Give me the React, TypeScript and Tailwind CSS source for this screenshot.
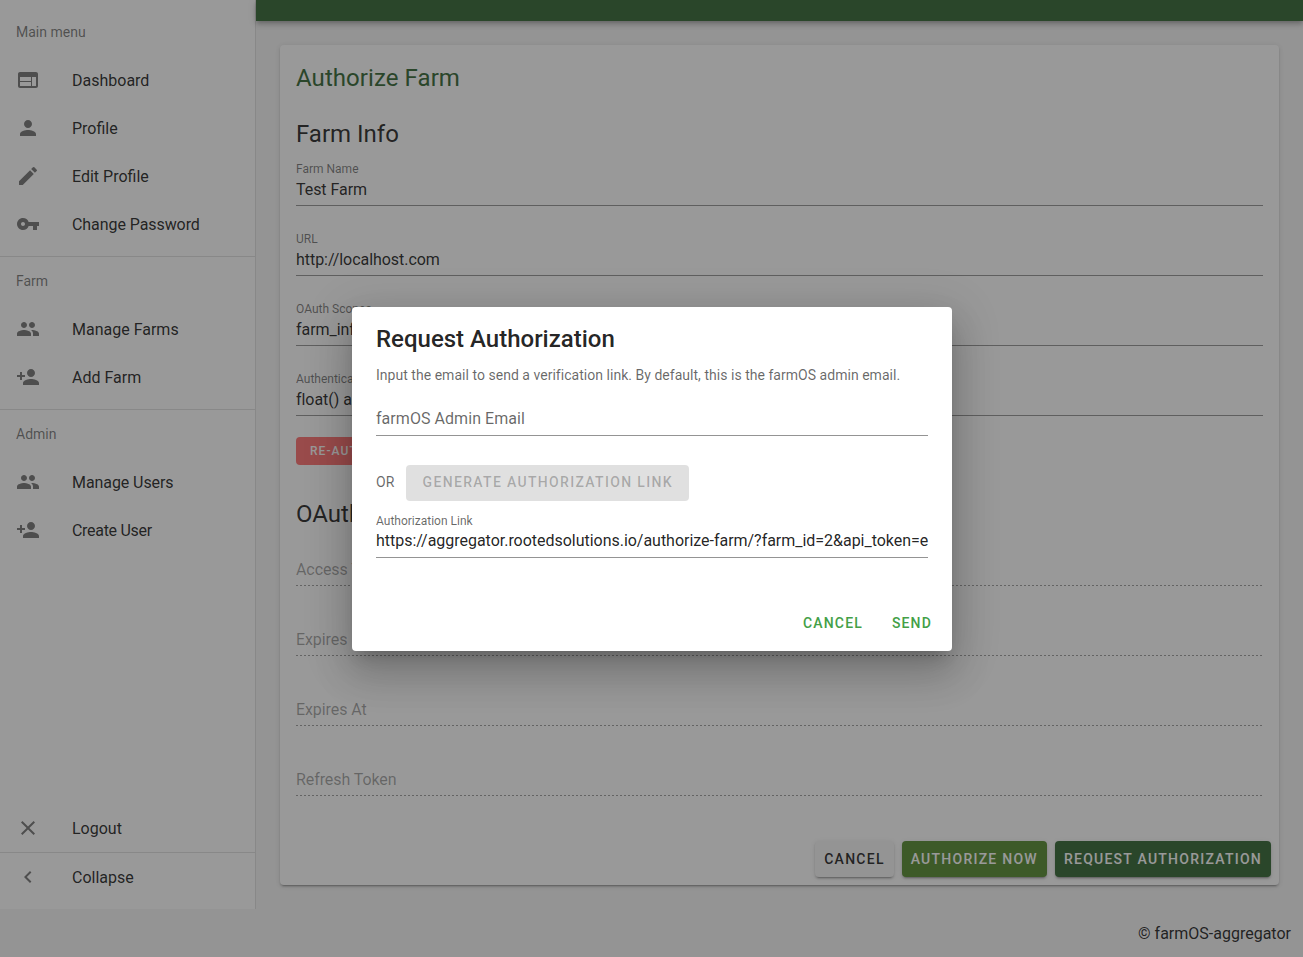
import type { ReactNode } from "react";
import {
  MdChevronLeft,
  MdClose,
  MdEdit,
  MdPeople,
  MdPerson,
  MdPersonAdd,
  MdVpnKey,
  MdWeb,
} from "react-icons/md";

function NavItem({ icon, label, labelClass = "" }: { icon: ReactNode; label: string; labelClass?: string }) {
  return (
    <div className="flex h-12 items-center px-4 text-base text-black/87">
      <span className="mr-8 flex h-6 w-6 items-center justify-center text-2xl text-black/54">{icon}</span>
      <span className={`pt-[2px] ${labelClass}`}>{label}</span>
    </div>
  );
}

function NavHeader({ label }: { label: string }) {
  return <div className="flex h-12 items-center px-4 text-sm text-black/54">{label}</div>;
}

function Field({ label, value }: { label: string; value: string }) {
  return (
    <div className="mb-6">
      <div className="flex h-[18px] items-center text-xs text-black/54">{label}</div>
      <div className="flex h-[24px] items-center text-base tracking-[-0.05px] text-black/87">{value}</div>
      <div className="mt-[3px] h-px bg-black/42" />
    </div>
  );
}

function DisabledField({ label }: { label: string }) {
  return (
    <div className="mb-[39px]">
      <div className="flex h-[30px] items-center text-base tracking-[-0.08px] text-black/38">{label}</div>
      <div className="h-px bg-[repeating-linear-gradient(to_right,rgba(0,0,0,0.38)_0,rgba(0,0,0,0.38)_2px,transparent_2px,transparent_4px)]" />
    </div>
  );
}

function CardButton({ label, className }: { label: string; className: string }) {
  return (
    <button
      type="button"
      className={`flex h-9 items-center rounded px-[9px] text-sm font-medium tracking-[1.25px] shadow-[0_3px_1px_-2px_rgba(0,0,0,0.2),0_2px_2px_0_rgba(0,0,0,0.14),0_1px_5px_0_rgba(0,0,0,0.12)] ${className}`}
    >
      {label}
    </button>
  );
}

function AuthorizeDialog() {
  return (
    <div className="absolute inset-0 z-10 flex items-center justify-center bg-[rgba(33,33,33,0.46)] pt-px pl-px">
      <div className="h-[344px] w-[600px] rounded bg-white shadow-[0_11px_15px_-7px_rgba(0,0,0,0.2),0_24px_38px_3px_rgba(0,0,0,0.14),0_9px_46px_8px_rgba(0,0,0,0.12)]">
        <div className="px-6 pt-4">
          <h2 className="text-2xl leading-8 font-medium text-black/87">Request Authorization</h2>
          <p className="mt-[10px] text-sm leading-5 tracking-[0.03px] text-black/60">
            Input the email to send a verification link. By default, this is the farmOS admin email.
          </p>
          <div className="mt-[18px] flex h-[32px] items-center text-base tracking-[0.05px] text-black/60">farmOS Admin Email</div>
          <div className="h-px bg-black/42" />
          <div className="mt-[29px] flex items-center">
            <span className="mr-3 -mt-[2px] text-sm text-black/60">OR</span>
            <button
              type="button"
              className="flex h-9 w-[283px] items-center justify-center rounded bg-black/12 pb-[2px] text-sm font-medium tracking-[1.33px] text-black/26"
            >
              GENERATE AUTHORIZATION LINK
            </button>
          </div>
          <div className="mt-[11px] flex h-[18px] items-center text-xs text-black/60">Authorization Link</div>
          <div className="flex h-[22px] items-center whitespace-nowrap text-base tracking-[-0.025px] text-black/87">
            https://aggregator.rootedsolutions.io/authorize-farm/?farm_id=2&amp;api_token=e
          </div>
          <div className="mt-[5px] h-px bg-black/42" />
        </div>
        <div className="mt-[47px] flex justify-end gap-[5px] pr-2">
          <button type="button" className="flex h-9 items-center px-3 text-sm font-medium tracking-[1.15px] text-[#43a047]">
            CANCEL
          </button>
          <button type="button" className="flex h-9 items-center px-3 text-sm font-medium tracking-[1.15px] text-[#43a047]">
            SEND
          </button>
        </div>
      </div>
    </div>
  );
}

export default function App() {
  return (
    <div className="relative flex h-[957px] flex-col overflow-hidden bg-[#f5f5f5] font-[Roboto,sans-serif]">
      <div className="flex h-[909px] shrink-0">
        <aside className="flex w-64 shrink-0 flex-col justify-between border-r border-black/12 bg-white">
          <div className="pt-2">
            <NavHeader label="Main menu" />
            <NavItem icon={<MdWeb />} label="Dashboard" />
            <NavItem icon={<MdPerson />} label="Profile" />
            <NavItem icon={<MdEdit />} label="Edit Profile" />
            <NavItem icon={<MdVpnKey />} label="Change Password" labelClass="tracking-[-0.07px]" />
            <div className="mt-2 h-px bg-black/12" />
            <NavHeader label="Farm" />
            <NavItem icon={<MdPeople />} label="Manage Farms" />
            <NavItem icon={<MdPersonAdd />} label="Add Farm" />
            <div className="mt-2 h-px bg-black/12" />
            <NavHeader label="Admin" />
            <NavItem icon={<MdPeople />} label="Manage Users" labelClass="tracking-[-0.08px]" />
            <NavItem icon={<MdPersonAdd />} label="Create User" labelClass="tracking-[-0.3px]" />
          </div>
          <div className="pb-2">
            <NavItem icon={<MdClose />} label="Logout" />
            <div className="h-px bg-black/12" />
            <NavItem icon={<MdChevronLeft />} label="Collapse" />
          </div>
        </aside>

        <main className="flex min-w-0 flex-1 flex-col">
          <div className="h-[21px] shrink-0 bg-[#336633] shadow-[0_2px_4px_-1px_rgba(0,0,0,0.2),0_4px_5px_0_rgba(0,0,0,0.14),0_1px_10px_0_rgba(0,0,0,0.12)]" />
          <div className="min-h-0 flex-1 p-6">
            <section className="flex h-full flex-col rounded bg-white shadow-[0_3px_1px_-2px_rgba(0,0,0,0.2),0_2px_2px_0_rgba(0,0,0,0.14),0_1px_5px_0_rgba(0,0,0,0.12)]">
              <div className="min-h-0 flex-1 px-4 pt-[17px]">
                <h1 className="text-2xl leading-8 tracking-[0.07px] text-[#336633]">Authorize Farm</h1>
                <h2 className="mt-6 text-2xl leading-8 text-black/87">Farm Info</h2>
                <div className="mt-[10px]">
                  <Field label="Farm Name" value="Test Farm" />
                  <Field label="URL" value="http://localhost.com" />
                  <Field label="OAuth Scopes" value="farm_info" />
                  <Field label="Authentication Error" value="float() argument" />
                </div>
                <button
                  type="button"
                  className="-mt-[3px] flex h-7 items-center rounded bg-[#ff7070] px-[14px] text-xs font-medium tracking-[1.07px] text-white"
                >
                  RE-AUTHORIZE
                </button>
                <h2 className="mt-[33px] mb-[25px] text-2xl leading-8 text-black/87">OAuth Token</h2>
                <DisabledField label="Access Token" />
                <DisabledField label="Expires In" />
                <DisabledField label="Expires At" />
                <DisabledField label="Refresh Token" />
              </div>
              <div className="flex justify-end gap-2 p-2">
                <CardButton label="CANCEL" className="bg-[#f5f5f5] text-black/87" />
                <CardButton label="AUTHORIZE NOW" className="bg-[#558b2f] text-white" />
                <CardButton label="REQUEST AUTHORIZATION" className="bg-[#336633] text-white" />
              </div>
            </section>
          </div>
        </main>
      </div>

      <footer className="flex h-12 items-center justify-end px-3 pt-[2px] text-base text-black/87">© farmOS-aggregator</footer>

      <AuthorizeDialog />
    </div>
  );
}
